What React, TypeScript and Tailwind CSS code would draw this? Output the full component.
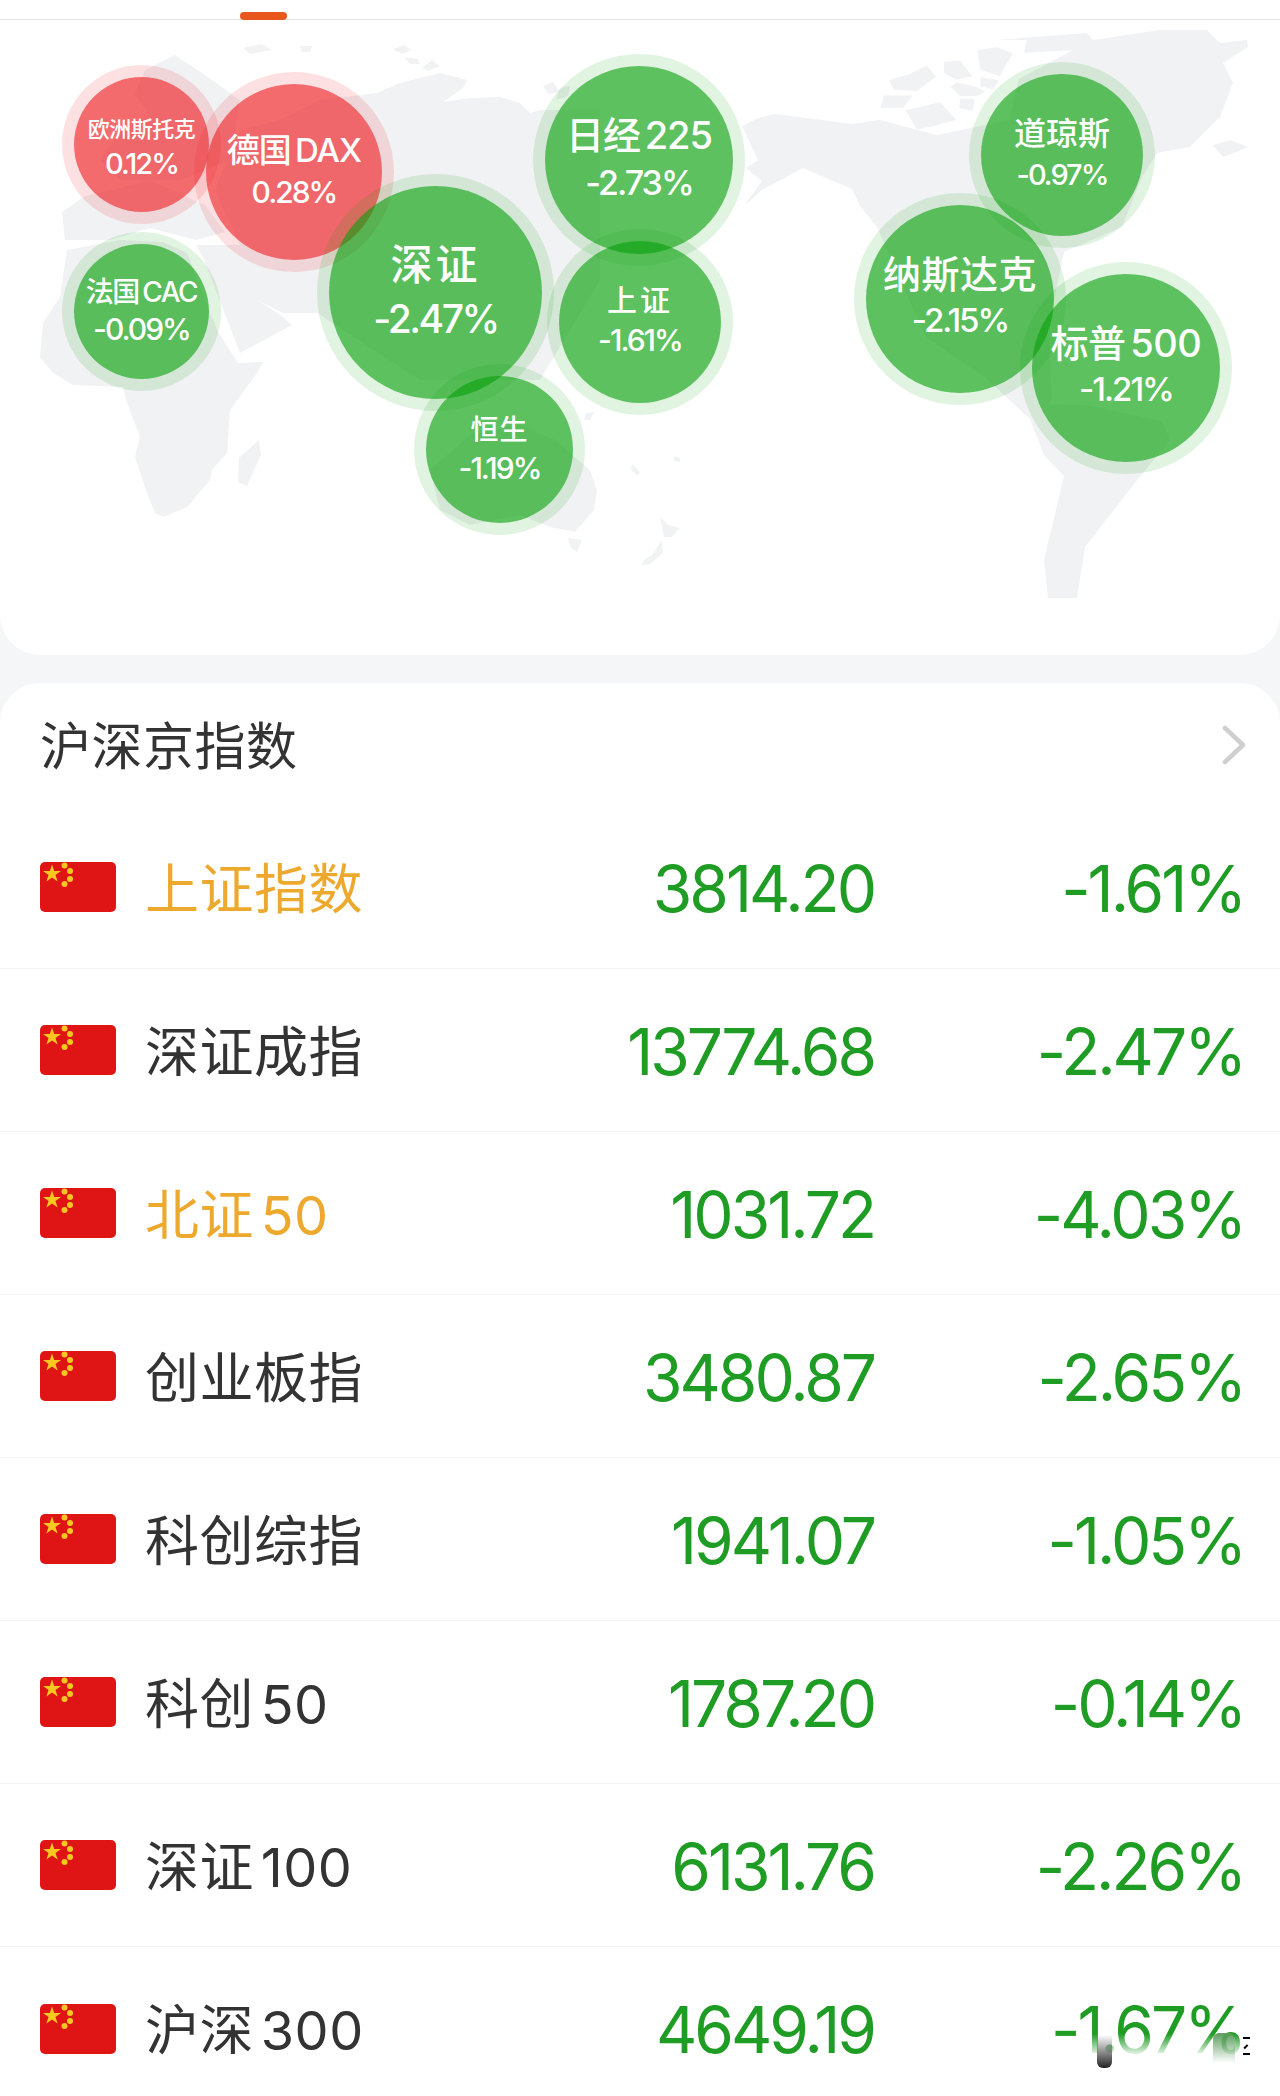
import React from "react";

const FONT = "font-['Inter','Noto_Sans_CJK_SC',sans-serif] [text-autospace:normal]";

type Bubble = {
  name: string;
  pct: string;
  x: number;
  y: number;
  d: number;
  up?: boolean;
  box: string;
  nameCls: string;
  pctCls: string;
};

const bubbles: Bubble[] = [
  { name: "欧洲斯托克", pct: "0.12%", x: 141.5, y: 144, d: 135, up: true, box: "pt-[8px]", nameCls: "text-[22px] tracking-[-0.5px]", pctCls: "text-[29px] tracking-[-2px] mt-[9px]" },
  { name: "德国DAX", pct: "0.28%", x: 294, y: 172, d: 176, up: true, box: "pb-[3px]", nameCls: "text-[33px] tracking-[-1px]", pctCls: "text-[30px] tracking-[-2px] mt-[10px]" },
  { name: "法国CAC", pct: "-0.09%", x: 141.5, y: 311, d: 135, box: "pb-[1px]", nameCls: "text-[28px] tracking-[-1.5px]", pctCls: "text-[30px] tracking-[-2px] mt-[8px]" },
  { name: "深证", pct: "-2.47%", x: 435.5, y: 292.5, d: 213, box: "pb-[4px]", nameCls: "text-[42px] tracking-[3px]", pctCls: "text-[39px] tracking-[-2.5px] mt-[13px]" },
  { name: "恒生", pct: "-1.19%", x: 499.5, y: 449, d: 147, box: "pb-0", nameCls: "text-[28px] tracking-[1px]", pctCls: "text-[30px] tracking-[-2px] mt-[9px]" },
  { name: "日经225", pct: "-2.73%", x: 639, y: 160, d: 188, box: "pb-[4px]", nameCls: "text-[38px] tracking-[-1px]", pctCls: "text-[34px] tracking-[-2px] mt-[12px]" },
  { name: "上证", pct: "-1.61%", x: 640, y: 322, d: 162, box: "pb-[4px]", nameCls: "text-[30px] tracking-[3px]", pctCls: "text-[30px] tracking-[-2px] mt-[10px]" },
  { name: "道琼斯", pct: "-0.97%", x: 1062, y: 155, d: 162, box: "pb-[4px]", nameCls: "text-[32px]", pctCls: "text-[29px] tracking-[-2px] mt-[10px]" },
  { name: "纳斯达克", pct: "-2.15%", x: 960, y: 298.5, d: 188, box: "pb-[6px]", nameCls: "text-[38px] tracking-[0.5px]", pctCls: "text-[33px] tracking-[-2px] mt-[11px]" },
  { name: "标普500", pct: "-1.21%", x: 1126, y: 368, d: 188, box: "pb-[6px]", nameCls: "text-[38px] tracking-[-0.5px]", pctCls: "text-[33px] tracking-[-2px] mt-[11px]" },
];

const rows = [
  { name: "上证指数", value: "3814.20", pct: "-1.61%", hot: true },
  { name: "深证成指", value: "13774.68", pct: "-2.47%" },
  { name: "北证50", value: "1031.72", pct: "-4.03%", hot: true },
  { name: "创业板指", value: "3480.87", pct: "-2.65%" },
  { name: "科创综指", value: "1941.07", pct: "-1.05%" },
  { name: "科创50", value: "1787.20", pct: "-0.14%" },
  { name: "深证100", value: "6131.76", pct: "-2.26%" },
  { name: "沪深300", value: "4649.19", pct: "-1.67%" },
];

const landmasses = [
  // Africa
  "40,357 43,323 60,297 67,250 120,240 163,242 187,253 217,330 238,363 263,362 257,373 230,410 227,453 212,470 210,480 187,507 163,517 155,513 147,493 135,457 140,437 127,403 123,387 73,385 53,373",
  // Madagascar
  "259,440 261,455 247,486 238,482 239,458 250,448",
  // Iberia and southern Europe
  "62,212 85,196 112,190 150,180 205,205 225,232 196,240 150,228 110,240 65,240",
  // Northern Europe
  "100,160 120,130 150,115 135,95 145,70 175,55 205,75 240,100 230,160 180,180 120,180",
  // Asia, with Arabia and the Gulf coast
  "203,257 240,353 292,325 283,317 262,303 253,298 283,313 317,313 420,380 540,380 600,280 600,110 540,110 530,113 520,103 500,97 470,98 443,102 463,88 467,80 440,73 400,83 377,93 320,100 280,120 240,130 215,190 240,245 196,245",
  // Arctic islands
  "300,46 312,46 310,52 302,52",
  "393,49 404,45 411,50 402,54",
  "404,57 418,59 420,64 410,64",
  "422,68 432,60 440,66 428,71",
  "243,48 262,44 272,50 250,54",
  "543,86 553,82 560,92 548,94",
  "560,88 570,86 568,96 556,100",
  // Small Pacific islands
  "586,413 594,412 590,420 584,420",
  "632,464 640,472 638,476 631,470",
  "674,456 680,458 680,462 674,461",
  // Australia
  "430,470 470,435 520,425 555,440 590,470 597,490 594,510 575,532 550,527 520,515 470,525 440,510",
  "568,538 582,540 577,552 571,548",
  // New Zealand
  "660,517 668,525 680,528 672,537 664,537",
  "662,540 652,555 644,560 642,565 650,564 663,553",
  // North America with Greenland
  "744,206 762,181 746,168 758,160 742,126 758,118 775,114 852,124 880,120 903,123 937,135 957,127 970,110 993,97 1017,80 1073,50 1020,53 997,40 1087,33 1093,40 1160,30 1207,30 1220,43 1247,40 1248,47 1223,63 1233,83 1220,117 1190,147 1157,153 1142,177 1122,227 1064,252 1048,328 1052,400 1032,421 987,379 926,337 877,227 860,206 852,189 803,168 762,190",
  // Iceland
  "1213,145 1230,140 1248,147 1223,157",
  // South America
  "1024,404 1085,405 1162,421 1170,440 1134,484 1085,547 1077,598 1048,598 1044,560 1064,476 1044,455",
];

// Canadian archipelago, plotted in a 3x grid
const archipelago = [
  "85,180 150,160 200,135 230,170 170,215 100,210",
  "250,125 300,120 340,170 290,180 250,160",
  "350,90 410,80 460,100 420,170 360,150",
  "70,225 160,225 130,265 60,265",
  "135,270 240,245 290,300 220,320 170,330",
  "290,185 350,200 380,215 350,230 300,230 270,200",
  "300,235 345,235 340,275 295,265",
  "360,170 420,180 400,210 360,200",
];

function WorldMap() {
  return (
    <svg className="absolute inset-0" width="1280" height="655" viewBox="0 0 1280 655">
      <g fill="#f1f2f4">
        {landmasses.map((points) => (
          <polygon key={points} points={points} />
        ))}
      </g>
      <g transform="translate(860 20) scale(0.3333)" fill="#f1f2f4" stroke="#ffffff" strokeWidth="3" strokeLinejoin="round">
        <path d="M60,60 L500,60 L450,300 L230,345 L60,300 Z" fill="#ffffff" stroke="none" />
        {archipelago.map((points) => (
          <polygon key={points} points={points} />
        ))}
      </g>
    </svg>
  );
}

function MarketBubble({ b }: { b: Bubble }) {
  const tone = b.up
    ? "bg-[rgba(238,27,33,0.65)] shadow-[0_0_0_12px_rgba(238,27,33,0.13)]"
    : "bg-[rgba(8,160,10,0.65)] shadow-[0_0_0_12px_rgba(8,160,10,0.12)]";
  return (
    <div
      className={`absolute flex flex-col items-center justify-center rounded-full font-medium leading-none text-white ${tone} ${b.box}`}
      style={{ left: b.x - b.d / 2, top: b.y - b.d / 2, width: b.d, height: b.d }}
    >
      <span className={`whitespace-nowrap ${b.nameCls}`}>{b.name}</span>
      <span className={`whitespace-nowrap ${b.pctCls}`}>{b.pct}</span>
    </div>
  );
}

function ChinaFlag() {
  return (
    <svg width="76" height="50" viewBox="0 0 76 50" className="shrink-0">
      <rect width="76" height="50" rx="5" fill="#df1414" />
      <g fill="#f8c820">
        <polygon points="12,2.5 14.2,9 21,9 15.5,13 17.6,19.5 12,15.5 6.4,19.5 8.5,13 3,9 9.8,9" />
        <circle cx="24.5" cy="3.5" r="3" />
        <circle cx="30" cy="9" r="3" />
        <circle cx="30" cy="17" r="3" />
        <circle cx="24.5" cy="22" r="3" />
      </g>
    </svg>
  );
}

function IndexRow({ name, value, pct, hot, last }: { name: string; value: string; pct: string; hot?: boolean; last?: boolean }) {
  return (
    <div className={`flex h-[163px] items-center pl-[40px] pr-[36px] ${last ? "" : "border-b border-[#f3f3f4]"}`}>
      <ChinaFlag />
      <span className={`ml-[29px] w-[360px] pt-[5px] text-[54px] leading-none tracking-[0.5px] whitespace-nowrap ${hot ? "text-[#eca92e]" : "text-[#333333]"}`}>
        {name}
      </span>
      <span className="w-[369px] pt-[3px] text-right text-[64px] leading-none tracking-[-3px] text-[#1f9c24]">{value}</span>
      <span className="flex-1 pt-[3px] text-right text-[64px] leading-none tracking-[-3px] text-[#1f9c24]">{pct}</span>
    </div>
  );
}

export default function App() {
  return (
    <div className={`relative h-[2096px] w-[1280px] overflow-hidden bg-[#f5f6f8] ${FONT}`}>
      {/* tab strip remnant */}
      <div className="relative h-[20px] border-b border-[#e4e4e6] bg-white">
        <div className="absolute left-[240px] top-[12px] h-[8px] w-[47px] rounded-full bg-[#e8571c]" />
      </div>

      {/* global markets map */}
      <section className="relative h-[635px] overflow-hidden rounded-b-[40px] bg-white">
        <div className="absolute left-0 top-[-20px] h-[655px] w-[1280px]">
          <WorldMap />
          {bubbles.map((b) => (
            <MarketBubble key={b.name} b={b} />
          ))}
        </div>
      </section>

      {/* mainland indices */}
      <section className="mt-[28px] rounded-t-[40px] bg-white">
        <div className="flex h-[123px] items-center justify-between pl-[40px] pr-[32px]">
          <h2 className="pt-[3px] text-[51px] font-normal leading-none tracking-[0.5px] text-[#333333]">沪深京指数</h2>
          <svg width="28" height="42" viewBox="0 0 28 42" fill="none" stroke="#cfcfcf" strokeWidth="4.5" strokeLinecap="round" strokeLinejoin="round">
            <path d="M5 4 L23 21 L5 38" />
          </svg>
        </div>
        {rows.map((r, i) => (
          <IndexRow key={r.name} {...r} last={i === rows.length - 1} />
        ))}
      </section>

      {/* platform watermark smeared over the last row */}
      <div className="absolute left-[1017px] top-[2034px] h-[36px] w-[232px] bg-gradient-to-b from-transparent via-white/80 to-white" />
      <div className="absolute left-[1097px] top-[2035px] h-[33px] w-[15px] rounded-b-md bg-gradient-to-b from-transparent to-[#222222]" />
      <div className="absolute left-[1213px] top-[2033px] h-[30px] w-[22px] rounded-t-md bg-gradient-to-b from-[#5d9c5f] to-transparent" />
      <div className="absolute left-[1243px] top-[2037px] h-[1.5px] w-[7px] bg-black" />
      <div className="absolute left-[1245px] top-[2044px] h-[5px] w-[1.5px] rotate-45 bg-black" />
      <div className="absolute left-[1243px] top-[2053px] h-[1.5px] w-[7px] bg-black" />
    </div>
  );
}
